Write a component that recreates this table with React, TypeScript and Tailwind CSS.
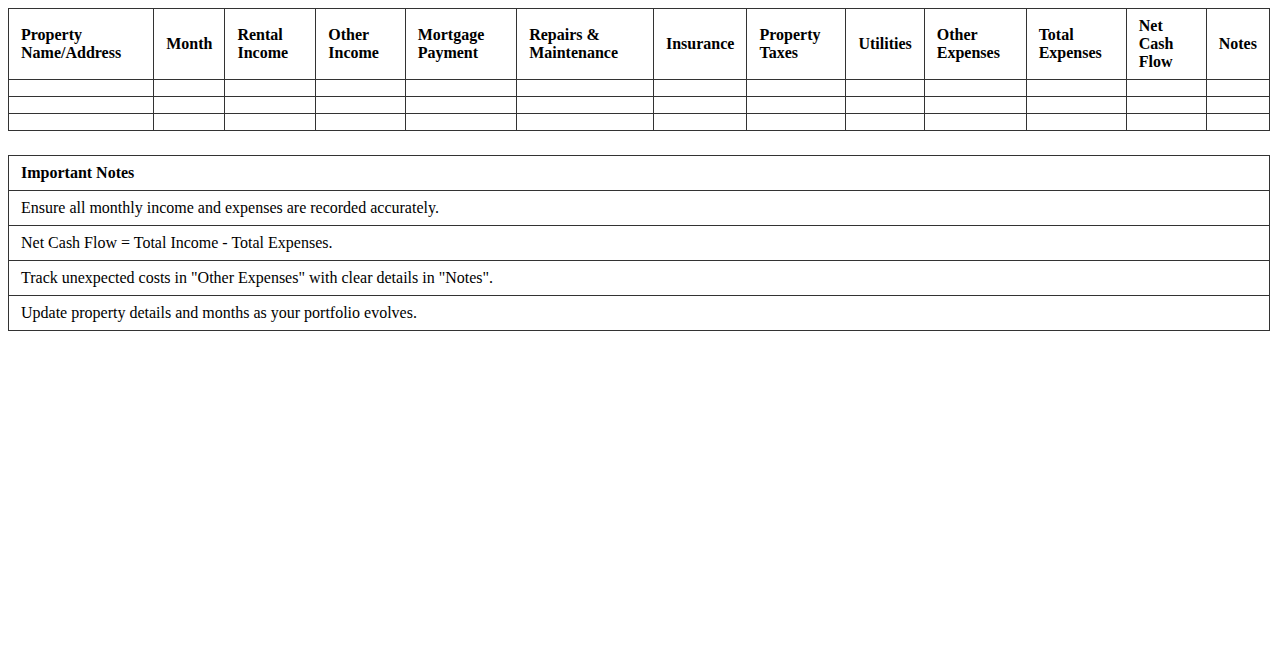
const columns = [
  "Property Name/Address",
  "Month",
  "Rental Income",
  "Other Income",
  "Mortgage Payment",
  "Repairs & Maintenance",
  "Insurance",
  "Property Taxes",
  "Utilities",
  "Other Expenses",
  "Total Expenses",
  "Net Cash Flow",
  "Notes",
];

const notes = [
  "Ensure all monthly income and expenses are recorded accurately.",
  "Net Cash Flow = Total Income - Total Expenses.",
  'Track unexpected costs in "Other Expenses" with clear details in "Notes".',
  "Update property details and months as your portfolio evolves.",
];

export default function App() {
  return (
    <div className="min-h-screen bg-white p-2 text-black text-[16px] leading-[18px] font-['Liberation_Serif','Times_New_Roman',serif]">
      {/* Tracker table */}
      <table className="w-full border-collapse mb-6">
        <thead>
          <tr>
            {columns.map((col) => (
              <th key={col} className="border border-[#333] px-3 py-2 text-left font-bold align-middle">
                {col}
              </th>
            ))}
          </tr>
        </thead>
        <tbody>
          {[0, 1, 2].map((row) => (
            <tr key={row}>
              {columns.map((col) => (
                <td key={col} className="border border-[#333] px-3 py-2"></td>
              ))}
            </tr>
          ))}
        </tbody>
      </table>

      {/* Notes table */}
      <table className="w-full border-collapse">
        <thead>
          <tr>
            <th className="border border-[#333] px-3 py-2 text-left font-bold">Important Notes</th>
          </tr>
        </thead>
        <tbody>
          {notes.map((note) => (
            <tr key={note}>
              <td className="border border-[#333] px-3 py-2">{note}</td>
            </tr>
          ))}
        </tbody>
      </table>
    </div>
  );
}
